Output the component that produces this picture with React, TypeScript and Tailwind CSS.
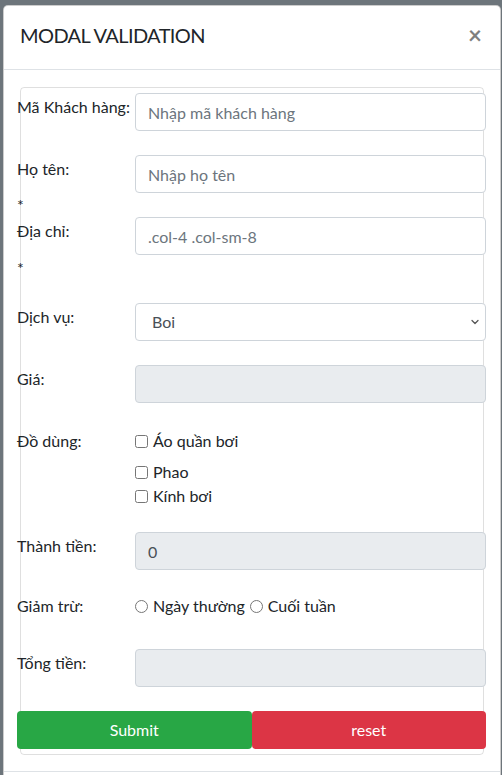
import { ChevronDown } from "lucide-react";

const font = { fontFamily: "Lato, 'Noto Sans', sans-serif" };

function Field({ placeholder, value, disabled }: { placeholder?: string; value?: string; disabled?: boolean }) {
  return (
    <input
      readOnly
      placeholder={placeholder}
      defaultValue={value}
      disabled={disabled}
      className={
        "h-[38px] w-full flex-1 rounded-[4px] border border-[#ced4da] px-3 text-base text-[#495057] outline-none placeholder:text-[#6c757d] " +
        (disabled ? "bg-[#e9ecef]" : "bg-white")
      }
    />
  );
}

function Label({ children }: { children: React.ReactNode }) {
  return <label className="block pt-[2px] leading-6">{children}</label>;
}

export default function App() {
  return (
    <div className="h-[775px] overflow-hidden bg-[#6d757b] pl-[3px] pr-[1px] pt-[5px] text-[#212529]" style={font}>
      <div className="rounded-t-[5px] border border-[rgba(0,0,0,0.2)] bg-white">
        <div className="flex items-center justify-between border-b border-[#dee2e6] px-4 pb-[19px] pt-[14px]">
          <h5 className="text-xl leading-[30px] tracking-[-0.6px]">MODAL VALIDATION</h5>
          <button className="mr-[2px] text-2xl font-bold leading-none text-[#000] opacity-50">×</button>
        </div>
        <div className="px-4 pb-4 pt-[17px]">
          <div className="rounded-[4px] border border-[rgba(0,0,0,0.125)] pb-[5px] pt-[5px]">
            <div className="-ml-[4px] -mr-[3px] text-base">
              <div className="mb-6 flex">
                <div className="w-[118px] shrink-0">
                  <Label>Mã Khách hàng:</Label>
                </div>
                <Field placeholder="Nhập mã khách hàng" />
              </div>

              <div className="mb-6 flex h-[38px]">
                <div className="w-[118px] shrink-0">
                  <Label>Họ tên:</Label>
                  <div className="mt-[12px] leading-6">*</div>
                </div>
                <Field placeholder="Nhập họ tên" />
              </div>

              <div className="mb-6 flex h-[62px] items-start">
                <div className="w-[118px] shrink-0">
                  <Label>Địa chỉ:</Label>
                  <div className="mt-[13px] leading-6">*</div>
                </div>
                <Field placeholder=".col-4 .col-sm-8" />
              </div>

              <div className="mb-6 flex">
                <div className="w-[118px] shrink-0">
                  <Label>Dịch vụ:</Label>
                </div>
                <div className="relative flex-1">
                  <select className="h-[38px] w-full appearance-none rounded-[4px] border border-[#ced4da] bg-white pl-4 text-base text-[#495057] outline-none">
                    <option>Boi</option>
                  </select>
                  <ChevronDown className="pointer-events-none absolute right-[5px] top-[13px] h-[12px] w-[12px] text-[#555]" strokeWidth={2.5} />
                </div>
              </div>

              <div className="mb-6 flex">
                <div className="w-[118px] shrink-0">
                  <Label>Giá:</Label>
                </div>
                <Field disabled />
              </div>

              <div className="mb-6 flex">
                <div className="w-[118px] shrink-0">
                  <Label>Đồ dùng:</Label>
                </div>
                <div className="flex flex-col pt-[2px] leading-6">
                  <label className="mb-[7px] flex items-center gap-[5px]">
                    <input type="checkbox" className="m-0 h-[13px] w-[13px]" />
                    Áo quần bơi
                  </label>
                  <label className="flex items-center gap-[5px]">
                    <input type="checkbox" className="m-0 h-[13px] w-[13px]" />
                    Phao
                  </label>
                  <label className="flex items-center gap-[5px]">
                    <input type="checkbox" className="m-0 h-[13px] w-[13px]" />
                    Kính bơi
                  </label>
                </div>
              </div>

              <div className="mb-[22px] flex">
                <div className="w-[118px] shrink-0">
                  <Label>Thành tiền:</Label>
                </div>
                <Field disabled value="0" />
              </div>

              <div className="mb-6 flex h-[33px]">
                <div className="w-[118px] shrink-0">
                  <Label>Giảm trừ:</Label>
                </div>
                <div className="flex items-start gap-[5px] pt-[2px] leading-6">
                  <label className="flex items-center gap-[5px]">
                    <input type="radio" name="g" className="m-0 h-[13px] w-[13px]" />
                    Ngày thường
                  </label>
                  <label className="flex items-center gap-[5px]">
                    <input type="radio" name="g" className="m-0 h-[13px] w-[13px]" />
                    Cuối tuần
                  </label>
                </div>
              </div>

              <div className="mb-6 flex">
                <div className="w-[118px] shrink-0">
                  <Label>Tổng tiền:</Label>
                </div>
                <Field disabled />
              </div>

              <div className="flex">
                <button className="h-[38px] flex-1 rounded-[4px] bg-[#28a745] text-base text-white">Submit</button>
                <button className="h-[38px] flex-1 rounded-[4px] bg-[#dc3545] text-base text-white">reset</button>
              </div>
            </div>
          </div>
        </div>
        <div className="h-[60px] border-t border-[#dee2e6]" />
      </div>
    </div>
  );
}
